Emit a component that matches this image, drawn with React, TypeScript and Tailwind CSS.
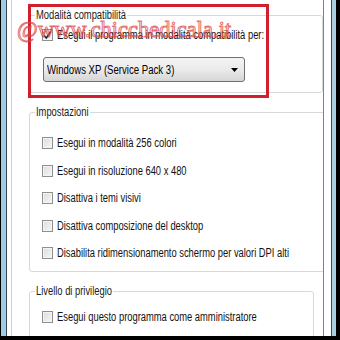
import React from 'react';

const font = { fontFamily: '"Liberation Sans", Arial, sans-serif' };

function Check({ checked = false, label }: { checked?: boolean; label: string }) {
  return (
    <div className="flex items-center h-[14px] gap-[4px]">
      <span className="relative shrink-0 w-[11px] h-[12px] border border-[#8e8f8f] bg-gradient-to-br from-[#dcdcdc] to-[#f7f7f7] shadow-[inset_0_0_0_1px_#f4f4f4]">
        {checked && (
          <svg viewBox="0 0 11 12" className="absolute -left-[1px] -top-[1px] w-[11px] h-[12px]">
            <path d="M2 6.5 L4.3 9 L9 2.5" fill="none" stroke="#1c2a3a" strokeWidth="1.6" />
          </svg>
        )}
      </span>
      <span className="inline-block origin-left scale-x-[0.78] text-[12px] leading-[14px] text-[#111] whitespace-nowrap">
        {label}
      </span>
    </div>
  );
}

function Group({ title, w, className, children }: { title: string; w: string; className?: string; children: React.ReactNode }) {
  return (
    <fieldset className={`w-[280px] border border-[#d5d9dc] rounded-[3px] pl-[5px] ${className ?? ''}`}>
      <legend className={`px-[1px] ${w} text-[12px] leading-[13px] text-[#1a1a1a] whitespace-nowrap`}>
        <span className="inline-block origin-left scale-x-[0.78]">{title}</span>
      </legend>
      {children}
    </fieldset>
  );
}

export default function App() {
  return (
    <div className="w-[340px] h-[340px] bg-black overflow-hidden" style={font}>
      <div className="flex h-[336px] relative">
        <div className="w-[1px] bg-black" />
        <div className="w-[5px] bg-[#9fcbe3]" />
        <div className="w-[1px] bg-[#3a4a52]" />
        <div className="w-[4px] bg-white" />
        <div className="w-[1px] bg-[#c9ced2]" />
        <div className="w-[311px] bg-white pt-[9px] pl-[17px] overflow-hidden">
          <Group title="Modalità compatibilità" w="w-[92px]" className="pb-[10px]">
            <div className="pl-[7px] pt-[6px]">
              <Check checked label="Esegui il programma in modalità compatibilità per:" />
              <div className="mt-[15px] ml-[1px] w-[202px] h-[25px] rounded-[3px] border border-[#707070] bg-gradient-to-b from-[#f3f3f3] via-[#ebebeb] to-[#d6d6d6] flex items-center justify-between pl-[3px] pr-[6px]">
                <span className="inline-block origin-left scale-x-[0.8] text-[12px] text-black whitespace-nowrap">
                  Windows XP (Service Pack 3)
                </span>
                <svg viewBox="0 0 7 4" className="w-[7px] h-[4px]">
                  <path d="M0 0 H7 L3.5 4 Z" fill="#000" />
                </svg>
              </div>
            </div>
          </Group>
          <Group title="Impostazioni" w="w-[55px]" className="mt-[13px] pb-[11px]">
            <div className="pl-[7px] pt-[17px] flex flex-col gap-[13.5px]">
              <Check label="Esegui in modalità 256 colori" />
              <Check label="Esegui in risoluzione 640 x 480" />
              <Check label="Disattiva i temi visivi" />
              <Check label="Disattiva composizione del desktop" />
              <Check label="Disabilita ridimensionamento schermo per valori DPI alti" />
            </div>
          </Group>
          <Group title="Livello di privilegio" w="w-[78px]" className="mt-[13px] pb-[20px]">
            <div className="pl-[7px] pt-[12px]">
              <Check label="Esegui questo programma come amministratore" />
            </div>
          </Group>
        </div>
        <div className="w-[1px] bg-[#7c8288]" />
        <div className="w-[7px] bg-white" />
        <div className="w-[1px] bg-[#3a4a52]" />
        <div className="w-[4px] bg-[#a9cfe0]" />
        <div className="w-[3px] bg-black" />

        <div className="absolute left-[28px] top-[4px] w-[241px] h-[94px] border-[3px] border-[#d21f2d]" />
        <div
          className="absolute left-[17px] top-[17px] text-[22.5px] leading-[26px] text-[rgba(255,190,190,0.25)] whitespace-nowrap [-webkit-text-stroke:1px_rgba(215,55,55,0.7)]"
          style={{ fontFamily: '"Liberation Serif", serif' }}
        >
          @www.chicchedicala.it
        </div>
      </div>
    </div>
  );
}
